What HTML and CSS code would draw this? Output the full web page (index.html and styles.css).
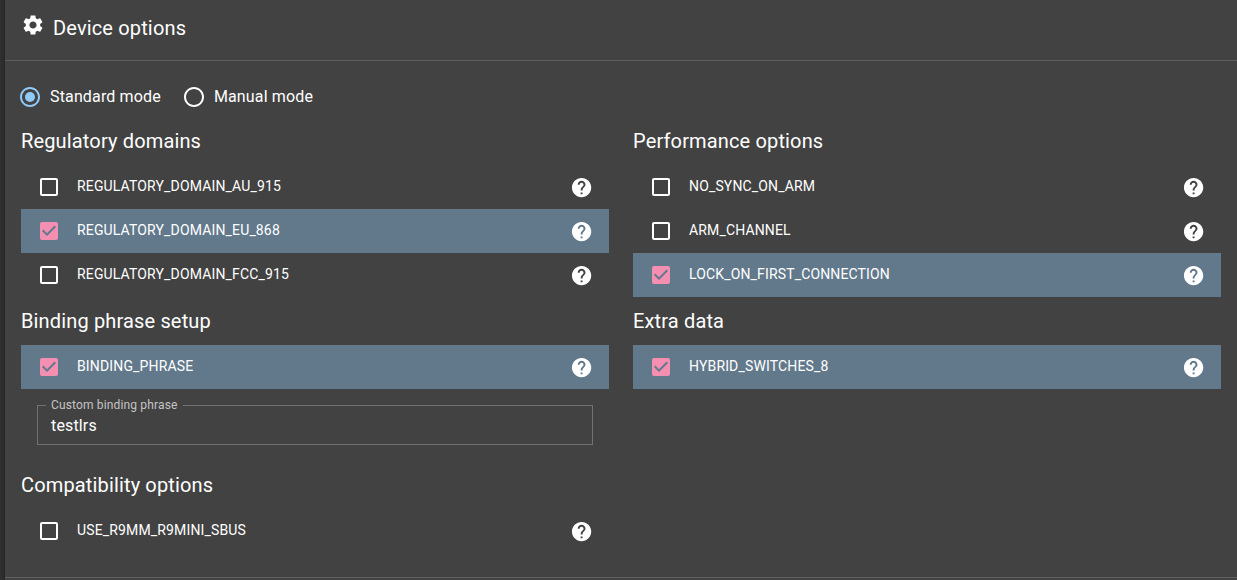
FILE: index.html
```html
<!DOCTYPE html>
<html lang="en">
<head>
<meta charset="utf-8">
<title>Device options</title>
<link rel="stylesheet" href="styles.css">
</head>
<body>
<svg class="defs" width="0" height="0" aria-hidden="true">
  <symbol id="box" viewBox="0 0 24 24"><path d="M19 5v14H5V5h14m0-2H5c-1.1 0-2 .9-2 2v14c0 1.1.9 2 2 2h14c1.1 0 2-.9 2-2V5c0-1.1-.9-2-2-2z"/></symbol>
  <symbol id="checked" viewBox="0 0 24 24"><path d="M19 3H5c-1.11 0-2 .9-2 2v14c0 1.1.89 2 2 2h14c1.11 0 2-.9 2-2V5c0-1.1-.89-2-2-2zm-9 14l-5-5 1.41-1.41L10 14.17l7.59-7.59L19 8l-9 9z"/></symbol>
  <symbol id="help" viewBox="0 0 24 24"><path d="M12 2C6.48 2 2 6.48 2 12s4.48 10 10 10 10-4.48 10-10S17.52 2 12 2zm1 17h-2v-2h2v2zm2.07-7.75l-.9.92C13.45 12.9 13 13.5 13 15h-2v-.5c0-1.1.45-2.1 1.17-2.83l1.24-1.26c.37-.36.59-.86.59-1.41 0-1.1-.9-2-2-2s-2 .9-2 2H8c0-2.21 1.79-4 4-4s4 1.79 4 4c0 .88-.36 1.68-.93 2.25z"/></symbol>
  <symbol id="gear" viewBox="0 0 24 24"><path d="M19.14 12.94c.04-.3.06-.61.06-.94 0-.32-.02-.64-.07-.94l2.03-1.58c.18-.14.23-.41.12-.61l-1.92-3.32c-.12-.22-.37-.29-.59-.22l-2.39.96c-.5-.38-1.03-.7-1.62-.94l-.36-2.54c-.04-.24-.24-.41-.48-.41h-3.84c-.24 0-.43.17-.47.41l-.36 2.54c-.59.24-1.13.57-1.62.94l-2.39-.96c-.22-.08-.47 0-.59.22L2.74 8.87c-.12.21-.08.47.12.61l2.03 1.58c-.05.3-.09.63-.09.94s.02.64.07.94l-2.03 1.58c-.18.14-.23.41-.12.61l1.92 3.32c.12.22.37.29.59.22l2.39-.96c.5.38 1.03.7 1.62.94l.36 2.54c.05.24.24.41.48.41h3.84c.24 0 .44-.17.47-.41l.36-2.54c.59-.24 1.13-.56 1.62-.94l2.39.96c.22.08.47 0 .59-.22l1.92-3.32c.12-.22.07-.47-.12-.61l-2.01-1.58zM12 15.6c-1.98 0-3.6-1.62-3.6-3.6s1.62-3.6 3.6-3.6 3.6 1.62 3.6 3.6-1.62 3.6-3.6 3.6z"/></symbol>
  <symbol id="ring" viewBox="0 0 24 24"><path d="M12 2C6.48 2 2 6.48 2 12s4.48 10 10 10 10-4.48 10-10S17.52 2 12 2zm0 18c-4.42 0-8-3.58-8-8s3.58-8 8-8 8 3.58 8 8-3.58 8-8 8z"/></symbol>
  <symbol id="dot" viewBox="0 0 24 24"><use href="#ring"/><circle cx="12" cy="12" r="5"/></symbol>
</svg>
<main class="card">
  <header class="title"><svg class="icon"><use href="#gear"/></svg><h1 class="heading">Device options</h1></header>
  <div class="content">
    <div class="modes">
      <label class="mode"><svg class="icon blue"><use href="#dot"/></svg><span>Standard mode</span></label>
      <label class="mode"><svg class="icon"><use href="#ring"/></svg><span>Manual mode</span></label>
    </div>
    <div class="columns">
      <div class="column">
        <section class="group">
          <h2 class="heading">Regulatory domains</h2>
          <div class="row"><svg class="icon"><use href="#box"/></svg><span class="name">REGULATORY_DOMAIN_AU_915</span><svg class="icon help"><use href="#help"/></svg></div>
          <div class="row selected"><svg class="icon pink"><use href="#checked"/></svg><span class="name">REGULATORY_DOMAIN_EU_868</span><svg class="icon help"><use href="#help"/></svg></div>
          <div class="row"><svg class="icon"><use href="#box"/></svg><span class="name">REGULATORY_DOMAIN_FCC_915</span><svg class="icon help"><use href="#help"/></svg></div>
        </section>
        <section class="group">
          <h2 class="heading">Binding phrase setup</h2>
          <div class="row selected"><svg class="icon pink"><use href="#checked"/></svg><span class="name">BINDING_PHRASE</span><svg class="icon help"><use href="#help"/></svg></div>
          <fieldset class="field"><legend class="legend">Custom binding phrase</legend><div class="value">testlrs</div></fieldset>
        </section>
        <section class="group">
          <h2 class="heading">Compatibility options</h2>
          <div class="row"><svg class="icon"><use href="#box"/></svg><span class="name">USE_R9MM_R9MINI_SBUS</span><svg class="icon help"><use href="#help"/></svg></div>
        </section>
      </div>
      <div class="column">
        <section class="group">
          <h2 class="heading">Performance options</h2>
          <div class="row"><svg class="icon"><use href="#box"/></svg><span class="name">NO_SYNC_ON_ARM</span><svg class="icon help"><use href="#help"/></svg></div>
          <div class="row"><svg class="icon"><use href="#box"/></svg><span class="name">ARM_CHANNEL</span><svg class="icon help"><use href="#help"/></svg></div>
          <div class="row selected"><svg class="icon pink"><use href="#checked"/></svg><span class="name">LOCK_ON_FIRST_CONNECTION</span><svg class="icon help"><use href="#help"/></svg></div>
        </section>
        <section class="group">
          <h2 class="heading">Extra data</h2>
          <div class="row selected"><svg class="icon pink"><use href="#checked"/></svg><span class="name">HYBRID_SWITCHES_8</span><svg class="icon help"><use href="#help"/></svg></div>
        </section>
      </div>
    </div>
  </div>
</main>
</body>
</html>
```
FILE: styles.css
```css
* { box-sizing: border-box; }
body {
  margin: 0;
  height: 580px;
  overflow: hidden;
  background: #303030;
  color: #fff;
  font: 400 16px/24px Roboto, sans-serif;
  letter-spacing: 0.15px;
}
.defs { display: block; }
.card {
  margin-left: 5px;
  height: 580px;
  background: #424242;
  box-shadow: 0 0 4px rgba(0, 0, 0, 0.4);
}
.icon { display: block; flex: none; width: 24px; height: 24px; fill: currentColor; }
.blue { color: #90caf9; }
.pink { color: #f48fb1; }
.heading { margin: 0; font-size: 20px; line-height: 32px; font-weight: 400; letter-spacing: 0.15px; }
.title { display: flex; height: 61px; padding: 12px 16px 0; border-bottom: 1px solid #5e5e5e; }
.title .icon { margin-top: 1px; }
.title .heading { margin-left: 8px; }
.content { height: 517px; padding: 15px 16px 0; border-bottom: 1px solid #5e5e5e; }
.modes { display: flex; height: 42px; margin-left: -3px; }
.mode { display: flex; align-items: center; margin-right: 21px; }
.mode span { margin-left: 8px; }
.columns { display: grid; grid-template-columns: 588px 588px; gap: 24px; padding-top: 7px; }
.group .heading { padding-bottom: 8px; }
.group + .group { margin-top: 8px; }
.row { display: flex; align-items: center; height: 44px; padding: 0 16px; }
.selected { background: #62798c; }
.name { flex: 1; margin-left: 16px; padding-bottom: 2px; font-size: 14px; line-height: 20px; letter-spacing: 0.15px; }
.help { width: 23.2px; height: 23.2px; margin-top: 1px; }
.field { margin: 10px 16px 24px; height: 46px; padding: 3px 8px 0; border: 1px solid #727272; }
.legend { padding: 0 5px; font-size: 12px; line-height: 12px; color: #c4c4c4; }
.value { padding-left: 5px; }
```
